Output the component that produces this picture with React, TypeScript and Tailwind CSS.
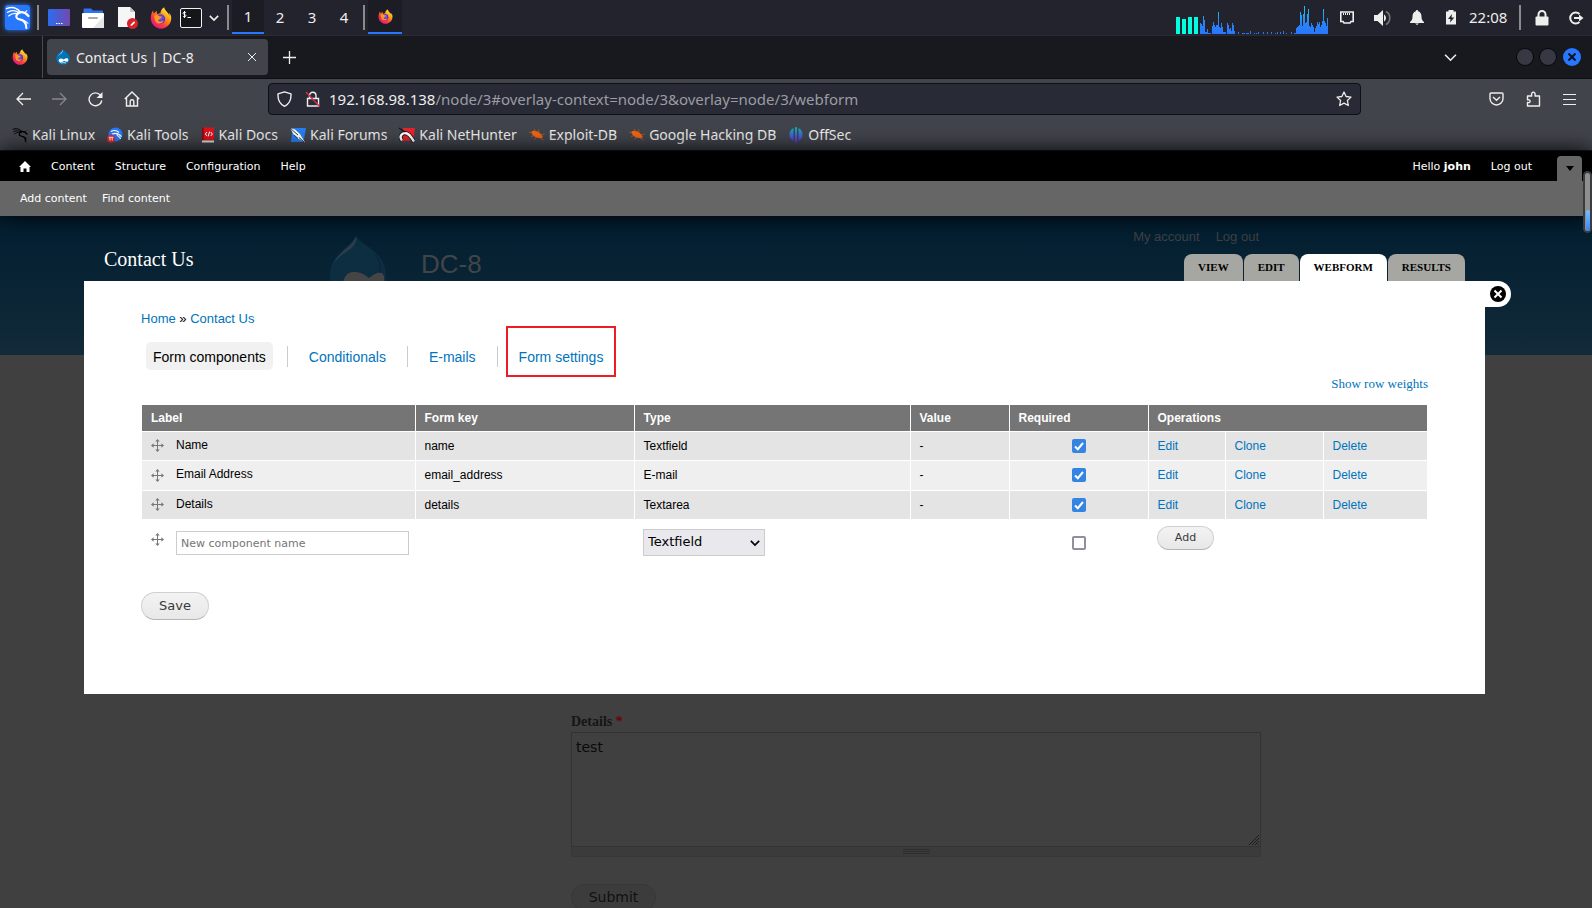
import type { ReactNode } from "react";

// ─── Data ─────────────────────────────────────────────────────────────────────
const CPU_HISTORY = [
  11, 10, 8, 18, 14, 2, 2, 5, 1, 1, 1, 0, 8, 12, 9, 7, 9, 9, 22, 7, 6, 11, 7, 2, 2, 2, 0, 11, 9, 5, 6, 3,
  11, 9, 3, 0, 0, 0, 2, 0, 0, 0, 1, 1, 1, 0, 1, 1, 1, 0, 3, 0, 0, 0, 1, 0, 1, 0, 2, 0, 0, 0, 0, 2,
  0, 0, 0, 2, 0, 0, 0, 2, 0, 0, 0, 1, 0, 2, 0, 0, 2, 0, 0, 3, 0, 0, 1, 0, 0, 0, 0, 2, 0, 0, 1, 1,
  6, 7, 8, 9, 22, 19, 8, 20, 28, 11, 12, 20, 25, 8, 7, 11, 9, 7, 2, 6, 8, 12, 10, 12, 7, 9, 13, 25, 13, 11, 8, 16,
];

const COMPONENTS = [
  { label: "Name", key: "name", type: "Textfield" },
  { label: "Email Address", key: "email_address", type: "E-mail" },
  { label: "Details", key: "details", type: "Textarea" },
];

const BOOKMARKS: { label: string; icon: ReactNode }[] = [
  { label: "Kali Linux", icon: <DragonIcon className="size-4 text-black" /> },
  { label: "Kali Tools", icon: <KaliToolsIcon /> },
  { label: "Kali Docs", icon: <KaliDocsIcon /> },
  { label: "Kali Forums", icon: <KaliForumsIcon /> },
  { label: "Kali NetHunter", icon: <NetHunterIcon /> },
  { label: "Exploit-DB", icon: <BugIcon /> },
  { label: "Google Hacking DB", icon: <BugIcon /> },
  { label: "OffSec", icon: <OffSecIcon /> },
];

// ─── Icons ────────────────────────────────────────────────────────────────────
function DragonIcon({ className }: { className: string }) {
  return (
    <svg viewBox="0 0 24 24" fill="none" stroke="currentColor" strokeLinecap="round" className={className} aria-hidden="true">
      <path d="M1.500 3.500C6 1.500 11 2.500 14.500 6.500" strokeWidth="1.500" />
      <path d="M2.500 7C6 4.800 10 5 13.500 7.500" strokeWidth="1.300" />
      <path d="M3.500 10.500C6 8.200 9 7.600 12 8.200" strokeWidth="1.200" />
      <path d="M12.500 7.500C16 6.200 19.500 7 22.500 10.500" strokeWidth="2.200" />
      <path d="M19 7.500L21 5.500" strokeWidth="1" />
      <path d="M14 7.500C9.500 9.500 10 13 14 13.800C18 14.500 20.500 16.500 20.500 22" strokeWidth="2" />
      <path d="M16.500 14.500C18.500 14.800 20.500 15.500 22 17.500" strokeWidth="1.100" />
    </svg>
  );
}

function FirefoxIcon({ className }: { className: string }) {
  return (
    <svg viewBox="0 0 24 24" className={className} aria-hidden="true">
      <defs>
        <linearGradient id="fx-flame" x1="0.850" y1="0.100" x2="0.200" y2="0.950">
          <stop offset="0" stopColor="#fff44f" />
          <stop offset="0.350" stopColor="#ff980e" />
          <stop offset="0.700" stopColor="#ff3647" />
          <stop offset="1" stopColor="#e31587" />
        </linearGradient>
        <radialGradient id="fx-globe" cx="0.500" cy="0.400" r="0.600">
          <stop offset="0" stopColor="#7a5cff" />
          <stop offset="1" stopColor="#4a2ba8" />
        </radialGradient>
      </defs>
      <path
        d="M22.800 9.500c-.5-1.300-1.600-2.700-2.400-3.100.7 1.300 1 2.600 1.200 3.500C20.200 6.600 18 5.300 16.200 2.400c-.4-.7-.7-1.500-.7-2.100-3 1.700-4 4.800-4.100 6.400-1.200.1-2.300.5-3.200 1.200-.9-.8-1-2.400-.5-3.600C6 5 4.900 6.400 4.100 7.100 3.600 6.500 3.500 4.600 3.700 3.600 1.800 5.600.9 9 .9 12.300.9 18.600 5.900 23.600 12 23.600s11.200-5 11.200-11.300c0-1-.1-2-.4-2.800z"
        fill="url(#fx-flame)"
      />
      <circle cx="11.600" cy="13" r="5" fill="url(#fx-globe)" />
      <path d="M4.500 9.500c2-1.500 4.500-1 5.600.5 1 .2 2.400.2 2.800.5-.1 1-1.500 1.600-2.700 2.200.3 1.600-.9 2-2.200 2.100 1.600 1.600 5 1.500 7-.3C14 19 7.500 19.500 5.500 15z" fill="#ff9a1c" />
    </svg>
  );
}

function DrupalIcon({ className }: { className: string }) {
  return (
    <svg viewBox="0 0 16 16" className={className} aria-hidden="true">
      <path d="M8 .5C9.500 2.500 14.800 4.500 14.800 9.300A6.500 6.500 0 0 1 8 15.700 6.500 6.500 0 0 1 1.200 9.300C1.200 4.500 6.800 2.800 8 .5z" fill="#0073ba" />
      <path d="M8 .5C7.500 3 4 5 3 7.500 5 5 8.500 4 8 .5z" fill="#9fd6f5" />
      <path d="M4 12.600C2.600 9.500 6.500 8.300 8.800 10.600 11 8.600 13.600 8.800 13.300 11.200 13 13.600 11 13 9 11.800 7 13.600 5 14.500 4 12.600z" fill="#fff" />
      <path d="M6.500 14.200c1.200-.8 3.500-.8 4.500 0" fill="none" stroke="#fff" strokeWidth=".8" />
    </svg>
  );
}

function KaliToolsIcon() {
  return (
    <svg viewBox="0 0 16 16" className="size-4" aria-hidden="true">
      <circle cx="8.500" cy="7.500" r="7" fill="#2777ff" />
      <path d="M4 4.500c3-1.600 6-1 8 1M5 7c3-1.200 7-.6 9.500 2.600M10 7c-.6 2.500 3 2 3.500 5" fill="none" stroke="#fff" strokeWidth="1.200" />
      <circle cx="4" cy="11.800" r="4" fill="#e0262d" />
      <path d="M1.800 10.300h4.600M3 10.500v3M5.200 10.500v3" stroke="#fff" strokeWidth="1" />
    </svg>
  );
}

function KaliDocsIcon() {
  return (
    <svg viewBox="0 0 14 16" className="h-4 w-[14px]" aria-hidden="true">
      <path d="M1 .5h12v13H1z" fill="#d8131b" />
      <path d="M1 .5h1.800v13H1z" fill="#8f0a10" />
      <path d="M1 13.500h12v2H1z" fill="#e8e2e2" />
      <path d="M6 5L4.300 7 6 9M9.700 5l1.700 2-1.700 2M8.600 4.600L7.200 9.400" fill="none" stroke="#fff" strokeWidth="1" />
    </svg>
  );
}

function KaliForumsIcon() {
  return (
    <svg viewBox="0 0 16 16" className="size-4" aria-hidden="true">
      <path d="M2.500 1H16l-2.500 14H1z" fill="#2480f2" />
      <path d="M0 1l5 1.500 5 4.500 5 8.500-7-4L4 8z" fill="#fff" />
      <path d="M0 1l8 7M9 10.500l5 4.500M4 8l4 3.500" stroke="#20242c" strokeWidth=".9" />
    </svg>
  );
}

function NetHunterIcon() {
  return (
    <svg viewBox="0 0 16 16" className="size-4" aria-hidden="true">
      <path d="M4 1h12l-1.500 12.500L3 14z" fill="#e5232d" />
      <path d="M3 13.500C-.5 9 3.500 5 8 6.500c3.500 1.200 4 4 7 8" fill="none" stroke="#15161a" strokeWidth="4" />
      <path d="M3 13.500C-.5 9 3.500 5 8 6.500c3.500 1.200 4 4 7 8" fill="none" stroke="#fff" strokeWidth="2.400" />
      <path d="M0 1l6 4" stroke="#15161a" strokeWidth="1.200" />
    </svg>
  );
}

function BugIcon() {
  return (
    <svg viewBox="0 0 16 16" className="size-4" aria-hidden="true">
      <path d="M2.500 4.500C4.500 3.200 8 3.800 10.500 5.800c2 1.600 3 3.600 3.300 4.400-1.500 1.300-5.300 1.200-8-.5-2.300-1.400-3.500-3.400-3.300-5.200z" fill="#f3640f" />
      <path d="M0 5l3 1M5 2l1.500 2.500M9.500 2.500L10 5M2 9.500l3-1M5.500 12.500L7.500 10M12 8l3.500-1M11 11l3.500 2" stroke="#c4622b" strokeWidth=".7" />
    </svg>
  );
}

function OffSecIcon() {
  return (
    <svg viewBox="0 0 16 16" className="size-4" aria-hidden="true">
      <defs>
        <linearGradient id="offsec" x1="0" y1="0" x2="0" y2="1">
          <stop offset="0" stopColor="#0fb5b5" />
          <stop offset="0.500" stopColor="#3a6bd6" />
          <stop offset="1" stopColor="#6a28d9" />
        </linearGradient>
      </defs>
      <path d="M5.500 1v13A7.300 7.300 0 0 1 5.500 1zM7 .3h2v15.500H7zM10.500 1a7.300 7.300 0 0 1 0 13z" fill="url(#offsec)" />
    </svg>
  );
}

function MoveIcon() {
  return (
    <svg viewBox="0 0 13 13" className="size-[13px] shrink-0" aria-hidden="true">
      <path d="M6.500 1v11M1 6.500h11" stroke="#777" strokeWidth="1" />
      <path d="M6.500 0l2.200 2.600H4.300zM6.500 13l2.200-2.600H4.300zM0 6.500l2.600-2.200v4.400zM13 6.500l-2.600-2.200v4.400z" fill="#777" />
    </svg>
  );
}

function ChevronDown({ className }: { className: string }) {
  return (
    <svg viewBox="0 0 12 12" fill="none" stroke="currentColor" className={className} aria-hidden="true">
      <path d="M1 3.500l5 5 5-5" />
    </svg>
  );
}

// ─── Desktop panel ────────────────────────────────────────────────────────────
function PanelDivider() {
  return <div className="h-[25px] w-0.5 bg-[#8b8b8d]" />;
}

function DesktopPanel() {
  return (
    <div className="flex h-9 shrink-0 items-start border-b border-[#2b2c33] bg-[#22232c] text-[#eeeeec]">
      <div className="flex h-[35px] items-center">
        <button type="button" aria-label="Applications" className="ml-[5px] size-[25px] rounded-[3px] bg-[#2777ff] shadow-[0_0_5px_#2777ff]">
          <DragonIcon className="size-[25px] text-white" />
        </button>
        <div className="ml-[7px]"><PanelDivider /></div>
        <button type="button" aria-label="Show desktop" className="ml-[9px]">
          <svg viewBox="0 0 22 17" className="h-[17px] w-[22px]">
            <defs>
              <linearGradient id="desk" x1="0" y1="0" x2="1" y2="0">
                <stop offset="0" stopColor="#2c6cf0" />
                <stop offset="1" stopColor="#7349ad" />
              </linearGradient>
            </defs>
            <rect width="22" height="17" rx="1" fill="url(#desk)" />
            <path d="M8 14.500h1.500M10.500 14.500H12M13 14.500h1.500" stroke="#fff" strokeWidth="1.200" />
          </svg>
        </button>
        <button type="button" aria-label="Files" className="ml-3">
          <svg viewBox="0 0 22 20" className="h-5 w-[22px]">
            <path d="M1.500 6V1.500a1 1 0 0 1 1-1H9l2 2h9a1 1 0 0 1 1 1V6z" fill="#2f73f0" />
            <rect y="5" width="22" height="15" rx="1" fill="#fff" />
            <path d="M22 8v12H11z" fill="#e6e6e6" />
            <rect x="6" y="9" width="10" height="2" rx="1" fill="#aaa" />
          </svg>
        </button>
        <button type="button" aria-label="Text editor" className="ml-[13px]">
          <svg viewBox="0 0 22 22" className="size-[22px]">
            <path d="M1 0h12l5 5v15H1z" fill="#f6f6f6" />
            <path d="M13 0l5 5h-5z" fill="#c8c8c8" />
            <circle cx="15.500" cy="16.500" r="5.500" fill="#d8232a" />
            <path d="M13.500 19l.5-1.800 3-3 1.200 1.200-3 3z" fill="#fff" />
          </svg>
        </button>
        <button type="button" aria-label="Firefox" className="ml-[11px]">
          <FirefoxIcon className="size-[22px]" />
        </button>
        <button type="button" aria-label="Terminal" className="ml-2 flex h-5 w-[22px] items-start rounded-[2px] border border-[#f2f2f2] bg-[#15161a]">
          <svg viewBox="0 0 20 18" className="h-[18px] w-5" fill="none" stroke="#fff">
            <path d="M5 4C4.500 2.800 2 3 2 4.300S5 5.300 5 6.700 2.300 8.200 2 7M3.500 2v7M6.500 8.500H10" />
          </svg>
        </button>
        <button type="button" aria-label="More terminals" className="ml-[7px]">
          <ChevronDown className="size-[10px] stroke-2" />
        </button>
        <div className="ml-2"><PanelDivider /></div>
      </div>

      <nav aria-label="Workspaces" className="ml-[3px] flex h-[34px] font-['Noto_Sans'] text-[15px]">
        <button type="button" className="w-8 border-b-2 border-[#2777ff] bg-[#1c1d24]">1</button>
        <button type="button" className="w-8">2</button>
        <button type="button" className="w-8">3</button>
        <button type="button" className="w-8">4</button>
      </nav>
      <div className="ml-[3px] flex h-[35px] items-center"><PanelDivider /></div>
      <button type="button" aria-label="Contact Us - Firefox" className="ml-[3px] flex h-[34px] w-[34px] items-center justify-center border-b-2 border-[#2777ff] bg-[#1c1d24]">
        <FirefoxIcon className="size-[15px]" />
      </button>

      <div className="ml-auto flex h-[35px] items-center pr-2">
        <svg viewBox="0 0 153 34" className="h-[35px] w-[153px] pb-px" aria-hidden="true">
          <defs>
            <linearGradient id="cpu" gradientUnits="userSpaceOnUse" x1="0" y1="34" x2="0" y2="5">
              <stop offset="0" stopColor="#2777ff" />
              <stop offset="0.400" stopColor="#2a84f5" />
              <stop offset="1" stopColor="#16d0ee" />
            </linearGradient>
          </defs>
          {[17, 15, 17, 17].map((h, i) => (
            <rect key={i} x={i * 6} y={34 - h} width="4" height={h} fill="#00ffe0" />
          ))}
          {CPU_HISTORY.map((h, i) => (
            <rect key={i} x={24 + i} y={34 - h} width="1" height={h} fill="url(#cpu)" />
          ))}
        </svg>
        <svg viewBox="0 0 16 14" className="ml-[10px] h-[14px] w-4" fill="none" stroke="currentColor" aria-hidden="true">
          <path d="M1.800 1h12.400v9.500h-2.200L11 12H5l-1-1.500H1.800z" strokeWidth="1.600" />
          <path d="M4.500 2v2M6.500 2v2M8.500 2v2M10.500 2v2" />
        </svg>
        <svg viewBox="0 0 18 16" className="ml-[19px] h-4 w-[18px]" aria-hidden="true">
          <path d="M0 5h3.500L9 0v16L3.500 11H0z" fill="currentColor" />
          <path d="M10 4.500c2.600 1.500 2.600 5.500 0 7z" fill="currentColor" />
          <path d="M12 1.500c5 2.500 5 10.500 0 13" fill="none" stroke="#77787e" strokeWidth="1.600" />
        </svg>
        <svg viewBox="0 0 14 15" className="ml-[18px] h-[15px] w-[14px]" fill="currentColor" aria-hidden="true">
          <path d="M7 0a1.200 1.200 0 0 1 1.200 1.300C10.500 2 11.500 4 11.500 6.500c0 3 .8 4 2.500 5.500v1H0v-1c1.700-1.500 2.500-2.500 2.500-5.500C2.500 4 3.500 2 5.800 1.300A1.200 1.200 0 0 1 7 0zM5 13.500h4L7 15z" />
        </svg>
        <svg viewBox="0 0 12 15" className="ml-[21px] h-[15px] w-3" aria-hidden="true">
          <path d="M3.500 0h5v1.500H11v13H1v-13h2.500z" fill="currentColor" />
          <path d="M7 4L3 9h2.500L5 12.500 9.300 7.500H6.500z" fill="#22232c" />
        </svg>
        <time className="ml-3 w-[50px] font-['Noto_Sans'] text-[15px]">22:08</time>
        <PanelDivider />
        <svg viewBox="0 0 14 16" className="ml-[14px] h-4 w-[14px]" aria-hidden="true">
          <path d="M3.500 8V4.500a3.500 3.500 0 0 1 7 0V8" fill="none" stroke="currentColor" strokeWidth="2" />
          <rect x="0.500" y="6.500" width="13" height="9" rx="1" fill="currentColor" />
        </svg>
        <svg viewBox="0 0 16 14" className="ml-[19px] h-[14px] w-4" fill="none" stroke="currentColor" strokeWidth="2" aria-hidden="true">
          <path d="M11.500 3A5.500 5.500 0 1 0 11.500 11M6 7h8" />
          <path d="M11 3.500L15.500 7 11 10.500z" fill="currentColor" stroke="none" />
        </svg>
      </div>
    </div>
  );
}

// ─── Browser chrome ───────────────────────────────────────────────────────────
function TabStrip() {
  return (
    <div className="flex h-[43px] shrink-0 items-center border-b border-[#0e0f13] bg-[#18191e] text-[#eeeeec]">
      <div className="flex h-full w-[43px] items-center border-r border-[#4a4b52] pl-3">
        <FirefoxIcon className="size-4" />
      </div>
      <div className="ml-1 flex h-9 w-[221px] items-center rounded bg-[#42444c] px-2">
        <DrupalIcon className="size-4" />
        <span className="ml-[5px] flex-1 font-['Noto_Sans'] text-[14px]">Contact Us | DC-8</span>
        <button type="button" aria-label="Close tab" className="mr-[3px]">
          <svg viewBox="0 0 10 10" className="size-[10px]" stroke="currentColor"><path d="M1 1l8 8M9 1L1 9" /></svg>
        </button>
      </div>
      <button type="button" aria-label="New tab" className="ml-[15px]">
        <svg viewBox="0 0 13 13" className="size-[13px]" stroke="currentColor" strokeWidth="1.300"><path d="M6.500 0v13M0 6.500h13" /></svg>
      </button>
      <div className="ml-auto flex items-center gap-[7px] pr-[11px]">
        <button type="button" aria-label="List all tabs" className="mr-[53px]"><ChevronDown className="size-[13px] stroke-[1.500]" /></button>
        <button type="button" aria-label="Minimize" className="size-4 rounded-full bg-[#363944] ring-1 ring-[#08090b]" />
        <button type="button" aria-label="Maximize" className="size-4 rounded-full bg-[#363944] ring-1 ring-[#08090b]" />
        <button type="button" aria-label="Close window" className="flex size-[18px] items-center justify-center rounded-full bg-[#2777ff]">
          <svg viewBox="0 0 8 8" className="size-2" stroke="#10131c" strokeWidth="2"><path d="M.5.5l7 7M7.500.5l-7 7" /></svg>
        </button>
      </div>
    </div>
  );
}

function NavBar() {
  return (
    <div className="flex h-10 shrink-0 items-center bg-[#42444c] px-4 text-[#eeeeec]">
      <div className="flex items-center gap-[21px]">
        <button type="button" aria-label="Back">
          <svg viewBox="0 0 15 14" className="h-[14px] w-[15px]" fill="none" stroke="currentColor" strokeWidth="1.300"><path d="M15 7H1M7 1L1 7l6 6" /></svg>
        </button>
        <button type="button" aria-label="Forward" className="text-[#86878c]">
          <svg viewBox="0 0 15 14" className="h-[14px] w-[15px]" fill="none" stroke="currentColor" strokeWidth="1.300"><path d="M0 7h14M8 1l6 6-6 6" /></svg>
        </button>
        <button type="button" aria-label="Reload">
          <svg viewBox="0 0 15 15" className="size-[15px]" fill="none" stroke="currentColor" strokeWidth="1.400">
            <path d="M12.500 3.300A6.400 6.400 0 1 0 13.800 8.500" />
            <path d="M14.500 0v6H8.500z" fill="currentColor" stroke="none" />
          </svg>
        </button>
        <button type="button" aria-label="Home">
          <svg viewBox="0 0 16 16" className="size-4" fill="none" stroke="currentColor" strokeWidth="1.400">
            <path d="M.8 8L8 1l7.200 7M2.500 6.800V15h11V6.800M6.200 15v-4.500a1.800 1.800 0 0 1 3.600 0V15" />
          </svg>
        </button>
      </div>

      <div className="mx-32 flex h-8 flex-1 items-center rounded border border-[#0f1015] bg-[#282a36] px-2">
        <svg viewBox="0 0 15 16" className="h-4 w-[15px]" fill="none" stroke="currentColor" strokeWidth="1.400" aria-hidden="true">
          <path d="M7.500.8l6.500 2c.3 5.500-1.500 10-6.500 12.500C2.500 12.800.7 8.300 1 2.800z" strokeLinejoin="round" />
        </svg>
        <svg viewBox="0 0 16 16" className="ml-[13px] size-4" fill="none" aria-hidden="true">
          <path d="M4.500 7V4.500a3.200 3.200 0 0 1 6.500 0V7M2.500 7.500h11V15h-11z" stroke="currentColor" strokeWidth="1.400" />
          <path d="M1 1l13.500 14.500" stroke="#e2264d" strokeWidth="1.400" />
        </svg>
        <label htmlFor="address" className="ml-2 font-['Noto_Sans'] text-[15px]">192.168.98.138</label>
        <input
          id="address"
          type="text"
          defaultValue="/node/3#overlay-context=node/3&overlay=node/3/webform"
          className="min-w-0 flex-1 bg-transparent font-['Noto_Sans'] text-[15px] text-[#9b9ca3] outline-none"
        />
        <button type="button" aria-label="Bookmark this page">
          <svg viewBox="0 0 16 16" className="size-4" fill="none" stroke="currentColor" strokeWidth="1.300" strokeLinejoin="round">
            <path d="M8 1l2.100 4.500 4.900.6-3.600 3.400.9 5L8 12.100 3.700 14.500l.9-5L1 6.100l4.900-.6z" />
          </svg>
        </button>
      </div>

      <div className="flex items-center gap-[22px]">
        <button type="button" aria-label="Save to Pocket">
          <svg viewBox="0 0 15 14" className="h-[14px] w-[15px]" fill="none" stroke="currentColor" strokeWidth="1.400">
            <path d="M2 1h11a1 1 0 0 1 1 1v4.500a6.500 6.500 0 0 1-13 0V2a1 1 0 0 1 1-1zM4 5l3.500 3.300L11 5" />
          </svg>
        </button>
        <button type="button" aria-label="Extensions">
          <svg viewBox="0 0 15 16" className="h-4 w-[15px]" fill="none" stroke="currentColor" strokeWidth="1.400" strokeLinejoin="round">
            <path d="M1.500 15V11.500c3.500.8 3.500-3.500 0-2.700V5h4.200C4.500-.2 10.200-.2 9 5h4.500v10z" />
          </svg>
        </button>
        <button type="button" aria-label="Open application menu">
          <svg viewBox="0 0 13 11" className="h-[11px] w-[13px]" stroke="currentColor" strokeWidth="1.200"><path d="M0 .5h13M0 5.500h13M0 10.500h13" /></svg>
        </button>
      </div>
    </div>
  );
}

function BookmarksBar() {
  return (
    <div className="flex h-8 shrink-0 items-center gap-3 border-b border-[#15161a] bg-[#42444c] pl-3 font-['Noto_Sans'] text-[14px] text-[#eeeeec]">
      {BOOKMARKS.map((b) => (
        <a key={b.label} href="#" className="flex items-center gap-1">
          {b.icon}
          {b.label}
        </a>
      ))}
    </div>
  );
}

// ─── Site admin toolbar ───────────────────────────────────────────────────────
function AdminToolbar() {
  return (
    <div className="relative z-10 shrink-0 font-['DejaVu_Sans'] text-[11px] text-white shadow-[0_0_20px_#000]">
      <div className="flex h-[30px] items-center bg-black pl-[19px]">
        <a href="#" aria-label="Home">
          <svg viewBox="0 0 12 11" className="h-[11px] w-3" fill="currentColor"><path d="M6 0l6 6h-1.500v5h-3V7.500h-3V11h-3V6H0z" /></svg>
        </a>
        <nav className="ml-5 flex gap-5 pt-0.5">
          <a href="#">Content</a>
          <a href="#">Structure</a>
          <a href="#">Configuration</a>
          <a href="#">Help</a>
        </nav>
        <div className="ml-auto flex h-full items-center gap-5">
          <span className="pt-0.5">Hello <strong>john</strong></span>
          <a href="#" className="pt-0.5">Log out</a>
          <button type="button" aria-label="Hide shortcuts" className="mr-[10px] ml-[5px] flex h-[25px] w-[25px] items-center justify-center self-end rounded-t bg-[#666]">
            <svg viewBox="0 0 8 5" className="h-[5px] w-2"><path d="M0 0h8L4 5z" fill="#000" /></svg>
          </button>
        </div>
      </div>
      <div className="flex h-[35px] items-center gap-[15px] bg-[#666] pt-0.5 pl-5">
        <a href="#">Add content</a>
        <a href="#">Find content</a>
      </div>
    </div>
  );
}

// ─── Dimmed page behind the overlay ───────────────────────────────────────────
function SitePage() {
  return (
    <div className="bg-[#404040]">
      <header className="h-[139px] bg-linear-to-b from-[#021e30] to-[#122a39]">
        <div className="relative mx-auto flex w-[960px] pl-[13px]">
          <svg viewBox="0 0 58 66" className="mt-5 h-[66px] w-[58px]" aria-hidden="true">
            <path d="M27 0c5 9 30 16 30 39A28 27 0 0 1 1 39C1 18 22 11 27 0z" fill="#0d2d40" />
            <path d="M27 0c3 14-16 15-23 29C9 15 23 12 27 0z" fill="#2c3e49" />
            <path d="M45 17c8 8 9 18 2 28 6-10 5-18-2-28z" fill="#082233" />
            <path d="M14 47c2-13 14-15 26-5 10-8 17-7 15 5z" fill="#454545" />
          </svg>
          <span className="mt-8 ml-[34px] font-['Liberation_Sans'] text-[26px] leading-8 text-[#424548]">DC-8</span>
          <nav className="absolute top-[13px] right-[17px] flex gap-4 font-['Liberation_Sans'] text-[13px] leading-4 text-[#3f4142]">
            <a href="#">My account</a>
            <a href="#">Log out</a>
          </nav>
        </div>
      </header>
      <form className="mx-auto w-[960px] pr-[15px] pl-[255px]">
        <div className="h-[339px] border-b border-[#333]" />
        <label htmlFor="details" className="mt-[18px] block font-['Liberation_Serif'] text-[14px] leading-5 font-bold text-[#151515]">
          Details <span className="text-[#6b0505]">*</span>
        </label>
        <div className="relative">
          <textarea
            id="details"
            defaultValue="test"
            className="block h-[115px] w-full resize-none border border-[#333] p-1 font-['DejaVu_Sans'] text-[14px] leading-5 text-[#0a0a0a]"
          />
          <svg viewBox="0 0 10 10" className="absolute right-0.5 bottom-0.5 size-[10px]" stroke="#1c1c1c" aria-hidden="true">
            <path d="M0 10L10 0M3 10l7-7M6 10l4-4M8.500 10L10 8.500" />
          </svg>
        </div>
        <div className="flex h-[10px] items-center justify-center border-x border-b border-[#373737] bg-[#3b3b3b]">
          <div className="h-[5px] w-[27px] border-y border-[#2e2e2e]"><div className="mt-px h-px bg-[#2e2e2e]" /></div>
        </div>
        <button type="button" className="mt-[27px] h-[27px] w-[85px] rounded-full border border-[#373737] bg-[#3c3c3c] font-['DejaVu_Sans'] text-[14px] text-[#111]">
          Submit
        </button>
      </form>
    </div>
  );
}

// ─── Overlay ──────────────────────────────────────────────────────────────────
function RequiredBox({ label, defaultChecked = false }: { label: string; defaultChecked?: boolean }) {
  return (
    <span className="relative mx-auto block size-[14px]">
      <input
        type="checkbox"
        aria-label={label}
        defaultChecked={defaultChecked}
        className="peer block size-[14px] appearance-none rounded-[2px] border-2 border-[#8f8f9d] bg-white checked:border-[#3584e4] checked:bg-[#3584e4]"
      />
      <svg viewBox="0 0 14 14" className="pointer-events-none absolute inset-0 hidden size-[14px] peer-checked:block" fill="none" stroke="#fff" strokeWidth="2" aria-hidden="true">
        <path d="M3 7.500l2.800 2.700L11 4" />
      </svg>
    </span>
  );
}

function ComponentsTable() {
  return (
    <div className="mx-px mt-3">
      <table className="w-full table-fixed border-collapse text-left text-[12px] leading-4 text-black">
        <colgroup>
          <col className="w-[273px]" />
          <col className="w-[219px]" />
          <col className="w-[276px]" />
          <col className="w-[99px]" />
          <col className="w-[139px]" />
          <col className="w-[77px]" />
          <col className="w-[98px]" />
          <col />
        </colgroup>
        <thead>
          <tr className="h-[26px] border-b border-white bg-[#757575] text-white">
            <th className="border-r border-white pl-[9px]">Label</th>
            <th className="border-r border-white pl-[9px]">Form key</th>
            <th className="border-r border-white pl-[9px]">Type</th>
            <th className="border-r border-white pl-[9px]">Value</th>
            <th className="border-r border-white pl-[9px]">Required</th>
            <th colSpan={3} className="pl-[9px]">Operations</th>
          </tr>
        </thead>
        <tbody>
          {COMPONENTS.map((c) => (
            <tr key={c.key} className="border-b border-white odd:h-[29px] odd:bg-[#e4e4e4] even:h-[30px] even:bg-[#efefef]">
              <td className="border-r border-white pl-[9px]">
                <div className="flex items-center gap-3">
                  <MoveIcon />
                  <span className="pb-0.5">{c.label}</span>
                </div>
              </td>
              <td className="border-r border-white pl-[9px]">{c.key}</td>
              <td className="border-r border-white pl-[9px]">{c.type}</td>
              <td className="border-r border-white pl-[9px]">-</td>
              <td className="border-r border-white"><RequiredBox label={`${c.label} required`} defaultChecked /></td>
              <td className="border-r border-white pl-[9px]"><a href="#" className="text-[#0074bd]">Edit</a></td>
              <td className="border-r border-white pl-[9px]"><a href="#" className="text-[#0074bd]">Clone</a></td>
              <td className="pl-[9px]"><a href="#" className="text-[#0074bd]">Delete</a></td>
            </tr>
          ))}
          <tr className="h-12 font-['DejaVu_Sans']">
            <td className="pl-[9px]">
              <div className="flex items-center gap-3">
                <div className="pb-2"><MoveIcon /></div>
                <input
                  type="text"
                  aria-label="New component name"
                  placeholder="New component name"
                  className="h-6 w-[233px] border border-[#ccc] px-1 text-[11px] placeholder:text-[#757575]"
                />
              </div>
            </td>
            <td />
            <td className="pb-0.5 pl-[9px]">
              <div className="relative h-[27px] w-[122px]">
                <select aria-label="Type" className="h-[27px] w-[122px] appearance-none border border-[#ccc] bg-[#e9e9ed] pl-1 text-[13px]">
                  <option>Textfield</option>
                  <option>E-mail</option>
                  <option>Textarea</option>
                </select>
                <ChevronDown className="pointer-events-none absolute top-[9px] right-[5px] size-[10px] stroke-2" />
              </div>
            </td>
            <td />
            <td><RequiredBox label="New component required" /></td>
            <td colSpan={3} className="pb-[10px] pl-[9px]">
              <button type="button" className="block h-6 w-[57px] rounded-full border border-[#d0d0d0] border-b-[#b4b4b4] bg-linear-to-b from-[#f3f3f3] to-[#e8e8e8] text-[11px] text-[#3a3a3a]">
                Add
              </button>
            </td>
          </tr>
        </tbody>
      </table>
    </div>
  );
}

function Overlay() {
  return (
    <div className="absolute inset-x-0 top-0 flex justify-center">
      <div className="mr-[23px] w-[88%]">
        <div className="flex h-[65px] items-end justify-between px-5 font-['Liberation_Serif']">
          <h1 className="pb-2 text-[20px] leading-7 text-white">Contact Us</h1>
          <nav className="flex gap-px text-[11px] leading-[27px] font-bold text-black uppercase">
            <a href="#" className="rounded-t-lg bg-[#a6a7a2] px-[14px]">View</a>
            <a href="#" className="rounded-t-lg bg-[#a6a7a2] px-[14px]">Edit</a>
            <a href="#" className="rounded-t-lg bg-white px-[14px]">Webform</a>
            <a href="#" className="rounded-t-lg bg-[#a6a7a2] px-[14px]">Results</a>
          </nav>
        </div>

        <div className="relative min-h-[412px] bg-white px-[57px] pt-[29px] pb-[74px] font-['Liberation_Sans']">
          <button type="button" aria-label="Close overlay" className="absolute top-0 -right-[26px] flex size-[26px] items-center justify-center rounded-r-full bg-white">
            <svg viewBox="0 0 16 16" className="size-4" aria-hidden="true">
              <circle cx="8" cy="8" r="8" />
              <path d="M4.500 4.500l7 7M11.500 4.500l-7 7" stroke="#fff" strokeWidth="2" />
            </svg>
          </button>

          <p className="text-[13px] leading-[18px] text-black">
            <a href="#" className="text-[#0074bd]">Home</a> » <a href="#" className="text-[#0074bd]">Contact Us</a>
          </p>

          <ul className="mt-[14px] flex items-center pl-[5px] text-[14px] leading-[26px] text-[#0074bd]">
            <li><a href="#" className="block rounded-[5px] bg-[#f1f1f1] px-[7px] pt-0.5 text-black">Form components</a></li>
            <li className="mx-[14px] h-[21px] w-px bg-[#ccc]" />
            <li><a href="#" className="block px-[7px] pt-0.5">Conditionals</a></li>
            <li className="mx-[14px] h-[21px] w-px bg-[#ccc]" />
            <li><a href="#" className="block px-[7px] pt-0.5">E-mails</a></li>
            <li className="mx-[14px] h-[21px] w-px bg-[#ccc]" />
            <li className="relative">
              <a href="#" className="block px-[7px] pt-0.5">Form settings</a>
              <span className="pointer-events-none absolute -inset-x-[6px] -top-4 -bottom-[7px] border-2 border-[#ee1c25]" />
            </li>
          </ul>

          <p className="mt-[5px] text-right font-['Liberation_Serif'] text-[13px] leading-[18px]">
            <a href="#" className="text-[#0074bd]">Show row weights</a>
          </p>

          <ComponentsTable />

          <button type="button" className="mt-[25px] h-7 w-[68px] rounded-full border border-[#d0d0d0] border-b-[#b4b4b4] bg-linear-to-b from-[#f3f3f3] to-[#e8e8e8] font-['DejaVu_Sans'] text-[13px] text-[#3a3a3a]">
            Save
          </button>
        </div>
      </div>
    </div>
  );
}

// ─── App ──────────────────────────────────────────────────────────────────────
export default function App() {
  return (
    <div className="flex h-screen flex-col overflow-hidden bg-[#404040]">
      <DesktopPanel />
      <TabStrip />
      <NavBar />
      <BookmarksBar />
      <div className="relative flex min-h-0 flex-1 flex-col">
        <AdminToolbar />
        <main className="relative min-h-0 flex-1 overflow-hidden">
          <SitePage />
          <Overlay />
        </main>
        {/* Scrollbar */}
        <div className="absolute top-5 right-0 z-20 flex h-[62px] w-[9px] items-end justify-center rounded-full border-2 border-[#3a3d40] bg-[#8f8f8f]">
          <div className="h-[21px] w-1 rounded-full bg-linear-to-b from-[#74c0ff] to-[#3b82f6]" />
        </div>
      </div>
    </div>
  );
}
